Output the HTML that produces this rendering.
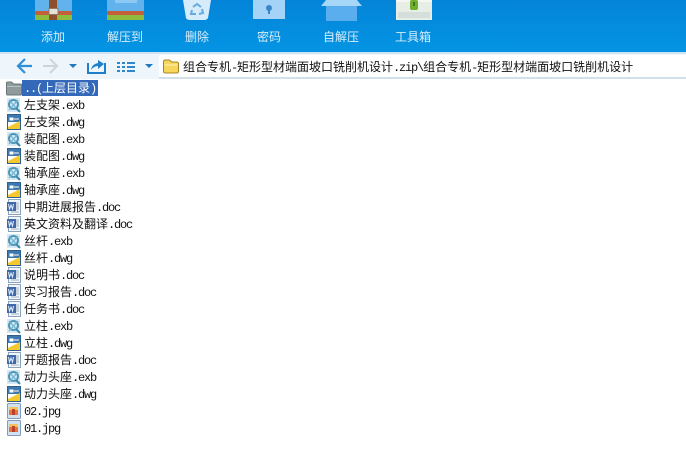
<!DOCTYPE html>
<html><head><meta charset="utf-8">
<style>
html,body{margin:0;padding:0;width:686px;height:475px;overflow:hidden;background:#fff}
body{position:relative;font:12px/17px "WenQuanYi Zen Hei","Noto Sans CJK SC",sans-serif;color:#111}
.top{position:absolute;left:0;top:0;width:686px;height:52px;background:linear-gradient(#0484d8,#0494e3)}
.lb{position:absolute;top:29px;height:16px;line-height:16px;color:#d8eefb;font-size:12px;text-align:center;width:60px;white-space:nowrap}
.nav{position:absolute;left:0;top:52px;width:686px;height:27px;background:#eef5fb;border-top:2px solid #cfe3f2;box-sizing:border-box}
.addr{position:absolute;left:159px;top:55px;width:527px;height:22px;background:#fff;border-bottom:2px solid #d3e0ea}
.path{position:absolute;left:183px;top:58px;line-height:17px;white-space:nowrap;color:#111}
.r{position:absolute;left:24px;height:17px;line-height:17px;white-space:nowrap;margin-top:-1px}
i{font:normal 12px/17px "Liberation Mono",monospace;letter-spacing:-1.2px}
.sel{position:absolute;left:22px;top:80px;width:76px;height:16px;background:#3468b8}
svg{position:absolute}
.ic{left:6px;width:16px;height:16px}
</style></head><body>
<svg width="0" height="0" style="position:absolute">
<symbol id="exb" viewBox="0 0 16 16"><rect x="1" y="1" width="13" height="14" fill="#d5e8f4"/><circle cx="7.5" cy="7.5" r="4.5" fill="none" stroke="#4a97ba" stroke-width="2"/><path d="M3 3l9 10M12 3L3 13" stroke="#6fb4d0" stroke-width="1.3"/><path d="M10 11l4 4" stroke="#3b88ae" stroke-width="2"/></symbol>
<symbol id="dwg" viewBox="0 0 16 16"><rect x="1.5" y=".5" width="13" height="15" fill="#fff" stroke="#2c5f92"/><rect x="2" y="1" width="12" height="7" fill="#3d78b0"/><path d="M2 13l12-6v8H2z" fill="#f5c92e"/><path d="M4 4h3v2H4zM8 5h5" stroke="#fff" fill="#fff"/></symbol>
<symbol id="doc" viewBox="0 0 16 16"><rect x="2.5" y=".5" width="12" height="15" fill="#f2f5f9" stroke="#8aa3bf"/><path d="M10 4h3M10 6h3M10 8h3M10 10h3M5 13h8" stroke="#9db1c6"/><rect x="1" y="3" width="9" height="9" fill="#3f68a8"/><path d="M2.5 5l1 5 1.5-4 1.5 4 1-5" stroke="#e6eef8" fill="none"/></symbol>
<symbol id="jpg" viewBox="0 0 16 16"><rect x="1.5" y=".5" width="13" height="15" rx="1" fill="#d3e2f1" stroke="#7f9bc0"/><rect x="3" y="4" width="9" height="8" fill="#e8743a"/><rect x="3" y="4" width="9" height="3" fill="#f6c25a"/><rect x="6" y="6" width="3" height="6" fill="#b8432a"/></symbol>
</svg>
<div class="top"></div>
<!-- add -->
<svg style="left:35px;top:0" width="37" height="20"><rect width="37" height="20" fill="#62b2ee"/><rect y="11" width="37" height="4" fill="#c2603a"/><rect y="15" width="37" height="5" fill="#8fbc3e"/><rect x="14" width="8" height="20" fill="#8f4f2a"/><rect x="14" y="8.500" width="9" height="6" fill="#e6e2d8" stroke="#8f7a62"/></svg>
<!-- unzip to -->
<svg style="left:107px;top:0" width="37" height="20"><rect width="37" height="20" fill="#62b2ee"/><rect y="11" width="37" height="4" fill="#c2603a"/><rect y="15" width="37" height="5" fill="#8fbc3e"/><rect x="8" width="22" height="3" fill="#8cc8f4"/></svg>
<!-- trash -->
<svg style="left:182px;top:0" width="30" height="21"><path d="M1 0h28l-3 18q-1 2-4 2H8q-3 0-4-2z" fill="#d6ecfb"/><path d="M11 7l4-3 4 3M20 9l1 4-4 1M10 10l-1 4h5" fill="none" stroke="#62ace2" stroke-width="2"/></svg>
<!-- key -->
<svg style="left:253px;top:0" width="32" height="19"><rect width="32" height="19" fill="#a5d3f8"/><circle cx="16" cy="8" r="3" fill="#3a86c8"/><rect x="15" y="9" width="2" height="5" fill="#3a86c8"/></svg>
<!-- self extract -->
<svg style="left:321px;top:0" width="41" height="21"><rect x="5" y="4" width="31" height="17" fill="#5aaeee"/><path d="M5 0h31l5 6H0z" fill="#a6d6f8"/></svg>
<!-- toolbox -->
<svg style="left:396px;top:0" width="36" height="20"><rect width="36" height="20" fill="#e6eee6"/><rect y="0" width="36" height="2" fill="#f5f8f2"/><path d="M2 13h32M2 15h32M2 17h32" stroke="#c5cfd2"/><rect x="14" width="8" height="10" rx="2" fill="#6fae2e"/><rect x="17" y="2" width="2" height="4" fill="#3d7a1e"/></svg>
<div class="lb" style="left:23px">添加</div>
<div class="lb" style="left:95px">解压到</div>
<div class="lb" style="left:167px">删除</div>
<div class="lb" style="left:239px">密码</div>
<div class="lb" style="left:311px">自解压</div>
<div class="lb" style="left:383px">工具箱</div>
<div class="nav"></div>
<div class="addr"></div>
<svg style="left:15px;top:55px" width="145" height="23" fill="none">
<path d="M17 11H4M10 4l-7 7 7 7" stroke="#2f8fd8" stroke-width="2.2"/>
<path d="M28 11h13M35 4l7 7-7 7" stroke="#ccd5dc" stroke-width="2"/>
<path d="M54 9h8l-4 4z" fill="#1f78c0"/>
<path d="M73 8v10h17V8" stroke="#1f7fc8" stroke-width="2"/>
<path d="M76 15q1-6 7-7V5l6 4-6 5v-3q-4 0-7 4z" fill="#1f7fc8"/>
<path d="M102 7h3v2h-3zM107 7h3v2h-3zM112 7h8v2h-8zM102 11h3v2h-3zM107 11h3v2h-3zM112 11h8v2h-8zM102 15h3v2h-3zM107 15h3v2h-3zM112 15h8v2h-8z" fill="#2f88c8"/>
<path d="M130 9h8l-4 4z" fill="#1f78c0"/>
</svg>
<svg style="left:163px;top:59px" width="16" height="15"><path d="M.5 3q0-2 2-2h4l2 2h5q2 0 2 2v7q0 2-2 2h-11q-2 0-2-2z" fill="#f7d65c" stroke="#a88428"/><path d="M1.5 6h13" stroke="#fff3b8"/></svg>
<div class="path">组合专机<i>-</i>矩形型材端面坡口铣削机设计<i>.zip\</i>组合专机<i>-</i>矩形型材端面坡口铣削机设计</div>

<div class="sel"></div>
<svg class="ic" style="top:80px;left:6px" viewBox="0 0 16 16"><path d="M.5 3q0-1 1-1h4l2 2h7q1 0 1 1v9q0 1-1 1h-13q-1 0-1-1z" fill="#8f9a9c" stroke="#6b7678"/><rect x="1" y="6" width="14" height="1" fill="#b9c2c4"/></svg>
<div class="r" style="top:80px;color:#fff"><i>..(</i>上层目录<i>)</i></div>

<svg class="ic" style="top:97px"><use href="#exb"/></svg><div class="r" style="top:97px">左支架<i>.exb</i></div>
<svg class="ic" style="top:114px"><use href="#dwg"/></svg><div class="r" style="top:114px">左支架<i>.dwg</i></div>
<svg class="ic" style="top:131px"><use href="#exb"/></svg><div class="r" style="top:131px">装配图<i>.exb</i></div>
<svg class="ic" style="top:148px"><use href="#dwg"/></svg><div class="r" style="top:148px">装配图<i>.dwg</i></div>
<svg class="ic" style="top:165px"><use href="#exb"/></svg><div class="r" style="top:165px">轴承座<i>.exb</i></div>
<svg class="ic" style="top:182px"><use href="#dwg"/></svg><div class="r" style="top:182px">轴承座<i>.dwg</i></div>
<svg class="ic" style="top:199px"><use href="#doc"/></svg><div class="r" style="top:199px">中期进展报告<i>.doc</i></div>
<svg class="ic" style="top:216px"><use href="#doc"/></svg><div class="r" style="top:216px">英文资料及翻译<i>.doc</i></div>
<svg class="ic" style="top:233px"><use href="#exb"/></svg><div class="r" style="top:233px">丝杆<i>.exb</i></div>
<svg class="ic" style="top:250px"><use href="#dwg"/></svg><div class="r" style="top:250px">丝杆<i>.dwg</i></div>
<svg class="ic" style="top:267px"><use href="#doc"/></svg><div class="r" style="top:267px">说明书<i>.doc</i></div>
<svg class="ic" style="top:284px"><use href="#doc"/></svg><div class="r" style="top:284px">实习报告<i>.doc</i></div>
<svg class="ic" style="top:301px"><use href="#doc"/></svg><div class="r" style="top:301px">任务书<i>.doc</i></div>
<svg class="ic" style="top:318px"><use href="#exb"/></svg><div class="r" style="top:318px">立柱<i>.exb</i></div>
<svg class="ic" style="top:335px"><use href="#dwg"/></svg><div class="r" style="top:335px">立柱<i>.dwg</i></div>
<svg class="ic" style="top:352px"><use href="#doc"/></svg><div class="r" style="top:352px">开题报告<i>.doc</i></div>
<svg class="ic" style="top:369px"><use href="#exb"/></svg><div class="r" style="top:369px">动力头座<i>.exb</i></div>
<svg class="ic" style="top:386px"><use href="#dwg"/></svg><div class="r" style="top:386px">动力头座<i>.dwg</i></div>
<svg class="ic" style="top:403px"><use href="#jpg"/></svg><div class="r" style="top:403px"><i>02.jpg</i></div>
<svg class="ic" style="top:420px"><use href="#jpg"/></svg><div class="r" style="top:420px"><i>01.jpg</i></div>
</body></html>
